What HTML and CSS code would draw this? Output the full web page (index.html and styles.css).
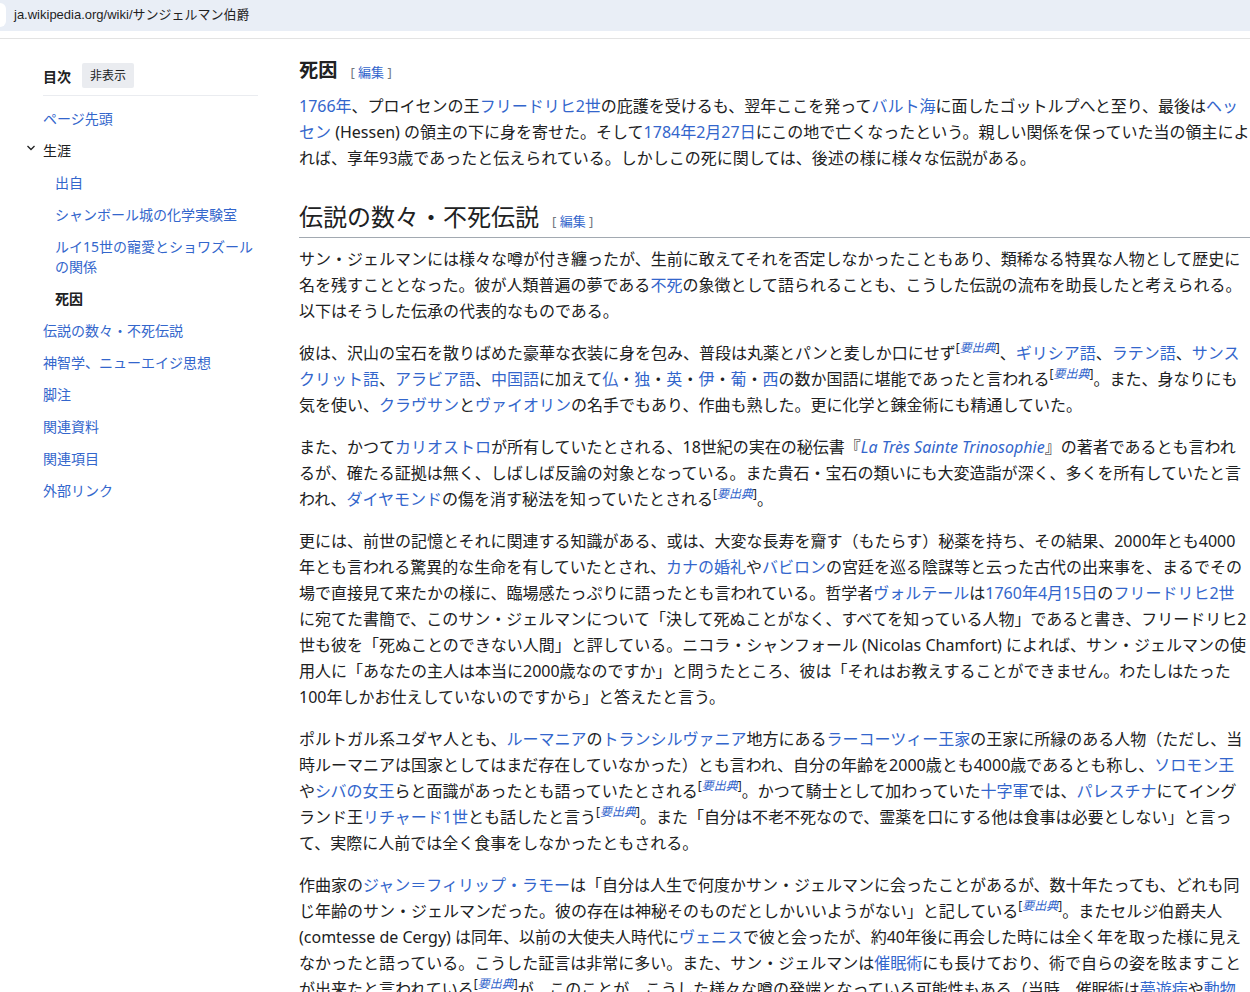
FILE: index.html
```html
<!DOCTYPE html>
<html lang="ja">
<head>
<meta charset="utf-8">
<title>サンジェルマン伯爵</title>
<link rel="stylesheet" href="styles.css">
</head>
<body>
<div class="chrome">
  <div class="urlbar"><span class="pill"></span><span class="url">ja.wikipedia.org/wiki/サンジェルマン伯爵</span></div>
</div>
<div class="page">
  <nav class="toc">
    <div class="toc-head"><span class="toc-title">目次</span><span class="toc-btn">非表示</span></div>
    <ul class="toc-list">
      <li class="toc-item"><a href="#">ページ先頭</a></li>
      <li class="toc-item toc-parent"><svg class="chev" width="10" height="10" viewBox="0 0 10 10"><polyline points="1.5,3 5,6.5 8.5,3" fill="none" stroke="#202122" stroke-width="1.3"/></svg><span>生涯</span></li>
      <li class="toc-item toc-sub"><a href="#">出自</a></li>
      <li class="toc-item toc-sub"><a href="#">シャンボール城の化学実験室</a></li>
      <li class="toc-item toc-sub"><a href="#">ルイ15世の寵愛とショワズールの関係</a></li>
      <li class="toc-item toc-sub toc-active">死因</li>
      <li class="toc-item"><a href="#">伝説の数々・不死伝説</a></li>
      <li class="toc-item"><a href="#">神智学、ニューエイジ思想</a></li>
      <li class="toc-item"><a href="#">脚注</a></li>
      <li class="toc-item"><a href="#">関連資料</a></li>
      <li class="toc-item"><a href="#">関連項目</a></li>
      <li class="toc-item"><a href="#">外部リンク</a></li>
    </ul>
  </nav>
  <main class="content">
    <h3 class="h3">死因<span class="edit">[ <a href="#">編集</a> ]</span></h3>
    <p><a href="#">1766年</a>、プロイセンの王<a href="#">フリードリヒ2世</a>の庇護を受けるも、翌年ここを発って<a href="#">バルト海</a>に面したゴットルプへと至り、最後は<a href="#">ヘッセン</a> (Hessen) の領主の下に身を寄せた。そして<a href="#">1784年</a><a href="#">2月27日</a>にこの地で亡くなったという。親しい関係を保っていた当の領主によれば、享年93歳であったと伝えられている。しかしこの死に関しては、後述の様に様々な伝説がある。</p>
    <h2 class="h2">伝説の数々・不死伝説<span class="edit">[ <a href="#">編集</a> ]</span></h2>
    <p>サン・ジェルマンには様々な噂が付き纏ったが、生前に敢えてそれを否定しなかったこともあり、類稀なる特異な人物として歴史に名を残すこととなった。彼が人類普遍の夢である<a href="#">不死</a>の象徴として語られることも、こうした伝説の流布を助長したと考えられる。以下はそうした伝承の代表的なものである。</p>
    <p>彼は、沢山の宝石を散りばめた豪華な衣装に身を包み、普段は丸薬とパンと麦しか口にせず<sup class="ref">[<a href="#">要出典</a>]</sup>、<a href="#">ギリシア語</a>、<a href="#">ラテン語</a>、<a href="#">サンスクリット語</a>、<a href="#">アラビア語</a>、<a href="#">中国語</a>に加えて<a href="#">仏</a>・<a href="#">独</a>・<a href="#">英</a>・<a href="#">伊</a>・<a href="#">葡</a>・<a href="#">西</a>の数か国語に堪能であったと言われる<sup class="ref">[<a href="#">要出典</a>]</sup>。また、身なりにも気を使い、<a href="#">クラヴサン</a>と<a href="#">ヴァイオリン</a>の名手でもあり、作曲も熟した。更に化学と錬金術にも精通していた。</p>
    <p>また、かつて<a href="#">カリオストロ</a>が所有していたとされる、18世紀の実在の秘伝書『<i><a href="#">La Très Sainte Trinosophie</a></i>』の著者であるとも言われるが、確たる証拠は無く、しばしば反論の対象となっている。また貴石・宝石の類いにも大変造詣が深く、多くを所有していたと言われ、<a href="#">ダイヤモンド</a>の傷を消す秘法を知っていたとされる<sup class="ref">[<a href="#">要出典</a>]</sup>。</p>
    <p>更には、前世の記憶とそれに関連する知識がある、或は、大変な長寿を齎す（もたらす）秘薬を持ち、その結果、2000年とも4000年とも言われる驚異的な生命を有していたとされ、<a href="#">カナの婚礼</a>や<a href="#">バビロン</a>の宮廷を巡る陰謀等と云った古代の出来事を、まるでその場で直接見て来たかの様に、臨場感たっぷりに語ったとも言われている。哲学者<a href="#">ヴォルテール</a>は<a href="#">1760年</a><a href="#">4月15日</a>の<a href="#">フリードリヒ2世</a>に宛てた書簡で、このサン・ジェルマンについて「決して死ぬことがなく、すべてを知っている人物」であると書き、フリードリヒ2世も彼を「死ぬことのできない人間」と評している。ニコラ・シャンフォール (Nicolas Chamfort) によれば、サン・ジェルマンの使用人に「あなたの主人は本当に2000歳なのですか」と問うたところ、彼は「それはお教えすることができません。わたしはたった100年しかお仕えしていないのですから」と答えたと言う。</p>
    <p>ポルトガル系ユダヤ人とも、<a href="#">ルーマニア</a>の<a href="#">トランシルヴァニア</a>地方にある<a href="#">ラーコーツィー王家</a>の王家に所縁のある人物（ただし、当時ルーマニアは国家としてはまだ存在していなかった）とも言われ、自分の年齢を2000歳とも4000歳であるとも称し、<a href="#">ソロモン王</a>や<a href="#">シバの女王</a>らと面識があったとも語っていたとされる<sup class="ref">[<a href="#">要出典</a>]</sup>。かつて騎士として加わっていた<a href="#">十字軍</a>では、<a href="#">パレスチナ</a>にてイングランド王<a href="#">リチャード1世</a>とも話したと言う<sup class="ref">[<a href="#">要出典</a>]</sup>。また「自分は不老不死なので、霊薬を口にする他は食事は必要としない」と言って、実際に人前では全く食事をしなかったともされる。</p>
    <p>作曲家の<a href="#">ジャン＝フィリップ・ラモー</a>は「自分は人生で何度かサン・ジェルマンに会ったことがあるが、数十年たっても、どれも同じ年齢のサン・ジェルマンだった。彼の存在は神秘そのものだとしかいいようがない」と記している<sup class="ref">[<a href="#">要出典</a>]</sup>。またセルジ伯爵夫人 (comtesse de Cergy) は同年、以前の大使夫人時代に<a href="#">ヴェニス</a>で彼と会ったが、約40年後に再会した時には全く年を取った様に見えなかったと語っている。こうした証言は非常に多い。また、サン・ジェルマンは<a href="#">催眠術</a>にも長けており、術で自らの姿を眩ますことが出来たと言われている<sup class="ref">[<a href="#">要出典</a>]</sup>が、このことが、こうした様々な噂の発端となっている可能性もある（当時、催眠術は<a href="#">夢遊病</a>や<a href="#">動物磁気</a>と結び付けて考えられていた）。</p>
  </main>
</div>
</body>
</html>
```
FILE: styles.css
```css
* { box-sizing: border-box; }
html { overflow: hidden; }
body {
  margin: 0;
  background: #fff;
  color: #202122;
  font-family: "Noto Sans", "Noto Sans CJK JP", sans-serif;
}
a { color: #36c; text-decoration: none; }

.chrome {
  height: 39px;
  border-bottom: 1px solid #e3e3e3;
}
.urlbar {
  height: 31px;
  background: #e9eef6;
  display: flex;
  align-items: center;
  padding-bottom: 1px;
}
.pill {
  width: 6px;
  height: 24px;
  background: #fff;
  border-radius: 0 12px 12px 0;
}
.url {
  margin-left: 8px;
  font-family: "Liberation Sans", "Noto Sans CJK JP", sans-serif;
  font-size: 13px;
  line-height: 18px;
  color: #1f1f1f;
}

.page {
  display: flex;
  gap: 41px;
  padding: 16px 0 0 43px;
}

.toc {
  flex: none;
  width: 215px;
  margin-top: 8px;
  font-size: 14px;
}
.toc-head {
  display: flex;
  align-items: center;
  gap: 11px;
  height: 33px;
  padding-bottom: 7px;
  border-bottom: 1px solid #eaecf0;
}
.toc-title { font-weight: bold; }
.toc-btn {
  background: #eaecf0;
  border-radius: 2px;
  font-size: 12px;
  line-height: 25px;
  padding: 0 8px;
}
.toc-list {
  list-style: none;
  margin: 7px 0 0;
  padding: 0;
}
.toc-item {
  padding: 6px 0;
  line-height: 20px;
  position: relative;
}
.toc-sub { padding-left: 12px; }
.toc-active { font-weight: bold; }
.chev {
  position: absolute;
  left: -17px;
  top: 8px;
}

.content {
  flex: none;
  width: 951px;
}
.h3 {
  font-size: 19.2px;
  line-height: 30px;
  font-weight: bold;
  margin: 0 0 8px;
}
.h2 {
  font-size: 24px;
  line-height: 36px;
  font-weight: normal;
  margin: 28px 0 8px;
  padding-bottom: 2px;
  border-bottom: 1px solid #a2a9b1;
}
.edit {
  font-size: 13px;
  line-height: 1;
  font-weight: normal;
  color: #72777d;
  margin-left: 13px;
}
p {
  margin: 0 0 16px;
  font-size: 16px;
  line-height: 26px;
}
.ref {
  font-size: 12px;
  line-height: 16px;
  vertical-align: top;
}
.ref a { font-style: italic; }
```
